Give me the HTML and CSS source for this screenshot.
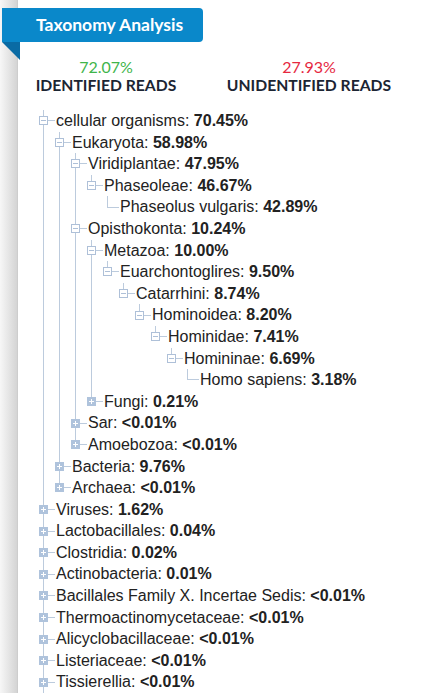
FILE: index.html
```html
<!DOCTYPE html>
<html>
<head>
<meta charset="utf-8">
<link rel="stylesheet" href="styles.css">
</head>
<body>
<div class="panel">
  <div class="ribbon">Taxonomy Analysis</div>
  <div class="fold"></div>
  <div class="stats">
    <div class="stat">
      <div class="pct good">72.07%</div>
      <div class="cap">IDENTIFIED READS</div>
    </div>
    <div class="stat">
      <div class="pct bad">27.93%</div>
      <div class="cap">UNIDENTIFIED READS</div>
    </div>
  </div>
  <div class="tree">
    <div class="row"><span class="c mid minus"><i class="box"></i></span><span class="t">cellular organisms: <b>70.45%</b></span></div>
    <div class="row"><span class="g"></span><span class="c mid minus"><i class="box"></i></span><span class="t">Eukaryota: <b>58.98%</b></span></div>
    <div class="row"><span class="g"></span><span class="g"></span><span class="c mid minus"><i class="box"></i></span><span class="t">Viridiplantae: <b>47.95%</b></span></div>
    <div class="row"><span class="g"></span><span class="g"></span><span class="g"></span><span class="c last minus"><i class="box"></i></span><span class="t">Phaseoleae: <b>46.67%</b></span></div>
    <div class="row"><span class="g"></span><span class="g"></span><span class="g"></span><span class="g e"></span><span class="c last leaf"></span><span class="t">Phaseolus vulgaris: <b>42.89%</b></span></div>
    <div class="row"><span class="g"></span><span class="g"></span><span class="c mid minus"><i class="box"></i></span><span class="t">Opisthokonta: <b>10.24%</b></span></div>
    <div class="row"><span class="g"></span><span class="g"></span><span class="g"></span><span class="c mid minus"><i class="box"></i></span><span class="t">Metazoa: <b>10.00%</b></span></div>
    <div class="row"><span class="g"></span><span class="g"></span><span class="g"></span><span class="g"></span><span class="c last minus"><i class="box"></i></span><span class="t">Euarchontoglires: <b>9.50%</b></span></div>
    <div class="row"><span class="g"></span><span class="g"></span><span class="g"></span><span class="g"></span><span class="g e"></span><span class="c last minus"><i class="box"></i></span><span class="t">Catarrhini: <b>8.74%</b></span></div>
    <div class="row"><span class="g"></span><span class="g"></span><span class="g"></span><span class="g"></span><span class="g e"></span><span class="g e"></span><span class="c last minus"><i class="box"></i></span><span class="t">Hominoidea: <b>8.20%</b></span></div>
    <div class="row"><span class="g"></span><span class="g"></span><span class="g"></span><span class="g"></span><span class="g e"></span><span class="g e"></span><span class="g e"></span><span class="c last minus"><i class="box"></i></span><span class="t">Hominidae: <b>7.41%</b></span></div>
    <div class="row"><span class="g"></span><span class="g"></span><span class="g"></span><span class="g"></span><span class="g e"></span><span class="g e"></span><span class="g e"></span><span class="g e"></span><span class="c last minus"><i class="box"></i></span><span class="t">Homininae: <b>6.69%</b></span></div>
    <div class="row"><span class="g"></span><span class="g"></span><span class="g"></span><span class="g"></span><span class="g e"></span><span class="g e"></span><span class="g e"></span><span class="g e"></span><span class="g e"></span><span class="c last leaf"></span><span class="t">Homo sapiens: <b>3.18%</b></span></div>
    <div class="row"><span class="g"></span><span class="g"></span><span class="g"></span><span class="c last plus"><i class="box"></i></span><span class="t">Fungi: <b>0.21%</b></span></div>
    <div class="row"><span class="g"></span><span class="g"></span><span class="c mid plus"><i class="box"></i></span><span class="t">Sar: <b>&lt;0.01%</b></span></div>
    <div class="row"><span class="g"></span><span class="g"></span><span class="c last plus"><i class="box"></i></span><span class="t">Amoebozoa: <b>&lt;0.01%</b></span></div>
    <div class="row"><span class="g"></span><span class="c mid plus"><i class="box"></i></span><span class="t">Bacteria: <b>9.76%</b></span></div>
    <div class="row"><span class="g"></span><span class="c last plus"><i class="box"></i></span><span class="t">Archaea: <b>&lt;0.01%</b></span></div>
    <div class="row"><span class="c mid plus"><i class="box"></i></span><span class="t">Viruses: <b>1.62%</b></span></div>
    <div class="row"><span class="c mid plus"><i class="box"></i></span><span class="t">Lactobacillales: <b>0.04%</b></span></div>
    <div class="row"><span class="c mid plus"><i class="box"></i></span><span class="t">Clostridia: <b>0.02%</b></span></div>
    <div class="row"><span class="c mid plus"><i class="box"></i></span><span class="t">Actinobacteria: <b>0.01%</b></span></div>
    <div class="row"><span class="c mid plus"><i class="box"></i></span><span class="t">Bacillales Family X. Incertae Sedis: <b>&lt;0.01%</b></span></div>
    <div class="row"><span class="c mid plus"><i class="box"></i></span><span class="t">Thermoactinomycetaceae: <b>&lt;0.01%</b></span></div>
    <div class="row"><span class="c mid plus"><i class="box"></i></span><span class="t">Alicyclobacillaceae: <b>&lt;0.01%</b></span></div>
    <div class="row"><span class="c mid plus"><i class="box"></i></span><span class="t">Listeriaceae: <b>&lt;0.01%</b></span></div>
    <div class="row"><span class="c mid plus"><i class="box"></i></span><span class="t">Tissierellia: <b>&lt;0.01%</b></span></div>
    <div class="row"><span class="c mid"></span></div>
  </div>
</div>
</body>
</html>
```
FILE: styles.css
```css
html, body {
  margin: 0;
  padding: 0;
  height: 100%;
  overflow: hidden;
}
body {
  background: linear-gradient(to right, #f7f7f7 0, #f0f0f0 20%, #d4d4d4 100%) 0 0 / 17px 100% no-repeat, #fff;
  font-family: "Liberation Sans", Arial, sans-serif;
}
.panel {
  margin-left: 17px;
  border-left: 1px solid #cdcdcd;
  background: #fff;
  min-height: 100%;
  box-sizing: border-box;
  padding-top: 8px;
}
.ribbon {
  margin-left: -16px;
  width: 201px;
  height: 34px;
  box-sizing: border-box;
  padding-left: 34px;
  background: #0a88ca;
  color: #fff;
  font-family: Lato, "Liberation Sans", sans-serif;
  font-weight: 700;
  font-size: 17.5px;
  line-height: 34px;
  border-radius: 0 4px 4px 0;
}
.fold {
  margin-left: -16px;
  width: 0;
  height: 0;
  border-top: 18px solid #0a6ba4;
  border-left: 18px solid transparent;
}
.stats {
  display: grid;
  grid-template-columns: 176px 230px;
  margin-top: -2px;
  font-family: Lato, "Liberation Sans", sans-serif;
  text-align: center;
}
.pct {
  font-size: 16px;
  line-height: 18px;
}
.good { color: #3fb54b; }
.bad { color: #e6283f; }
.cap {
  font-size: 15.7px;
  line-height: 19px;
  font-weight: 700;
  color: #1c2533;
}
.tree {
  margin-top: 15px;
  padding-left: 17px;
  color: #222;
  font-size: 16px;
}
.row {
  display: flex;
  height: 21.6px;
  line-height: 21.6px;
  white-space: nowrap;
}
.g {
  flex: 0 0 16px;
  background: linear-gradient(#bccbdd, #bccbdd) 8px 0 / 1px 100% no-repeat;
}
.g.e { background: none; }
.c {
  flex: 0 0 20px;
  display: flex;
  align-items: center;
  background:
    linear-gradient(#bccbdd, #bccbdd) 8px 50% / 12px 1px no-repeat,
    linear-gradient(#bccbdd, #bccbdd) 8px 0 / 1px 100% no-repeat;
}
.c.last {
  background:
    linear-gradient(#bccbdd, #bccbdd) 8px 50% / 12px 1px no-repeat,
    linear-gradient(#bccbdd, #bccbdd) 8px 0 / 1px 50% no-repeat;
}
.c.mid:only-child {
  background: linear-gradient(#bccbdd, #bccbdd) 8px 0 / 1px 100% no-repeat;
}
.box {
  width: 9px;
  height: 9px;
  margin-left: 4px;
  box-sizing: border-box;
}
.minus .box {
  border: 1px solid #aec0d8;
  background: linear-gradient(#aec0d8, #aec0d8) 1px 3px / 5px 1px no-repeat, #fff;
}
.plus .box {
  background:
    linear-gradient(#fff, #fff) 2px 4px / 5px 1px no-repeat,
    linear-gradient(#fff, #fff) 4px 2px / 1px 5px no-repeat,
    #afc3dc;
}
.t {
  padding-left: 1px;
}
.t b {
  font-weight: 700;
}
```
